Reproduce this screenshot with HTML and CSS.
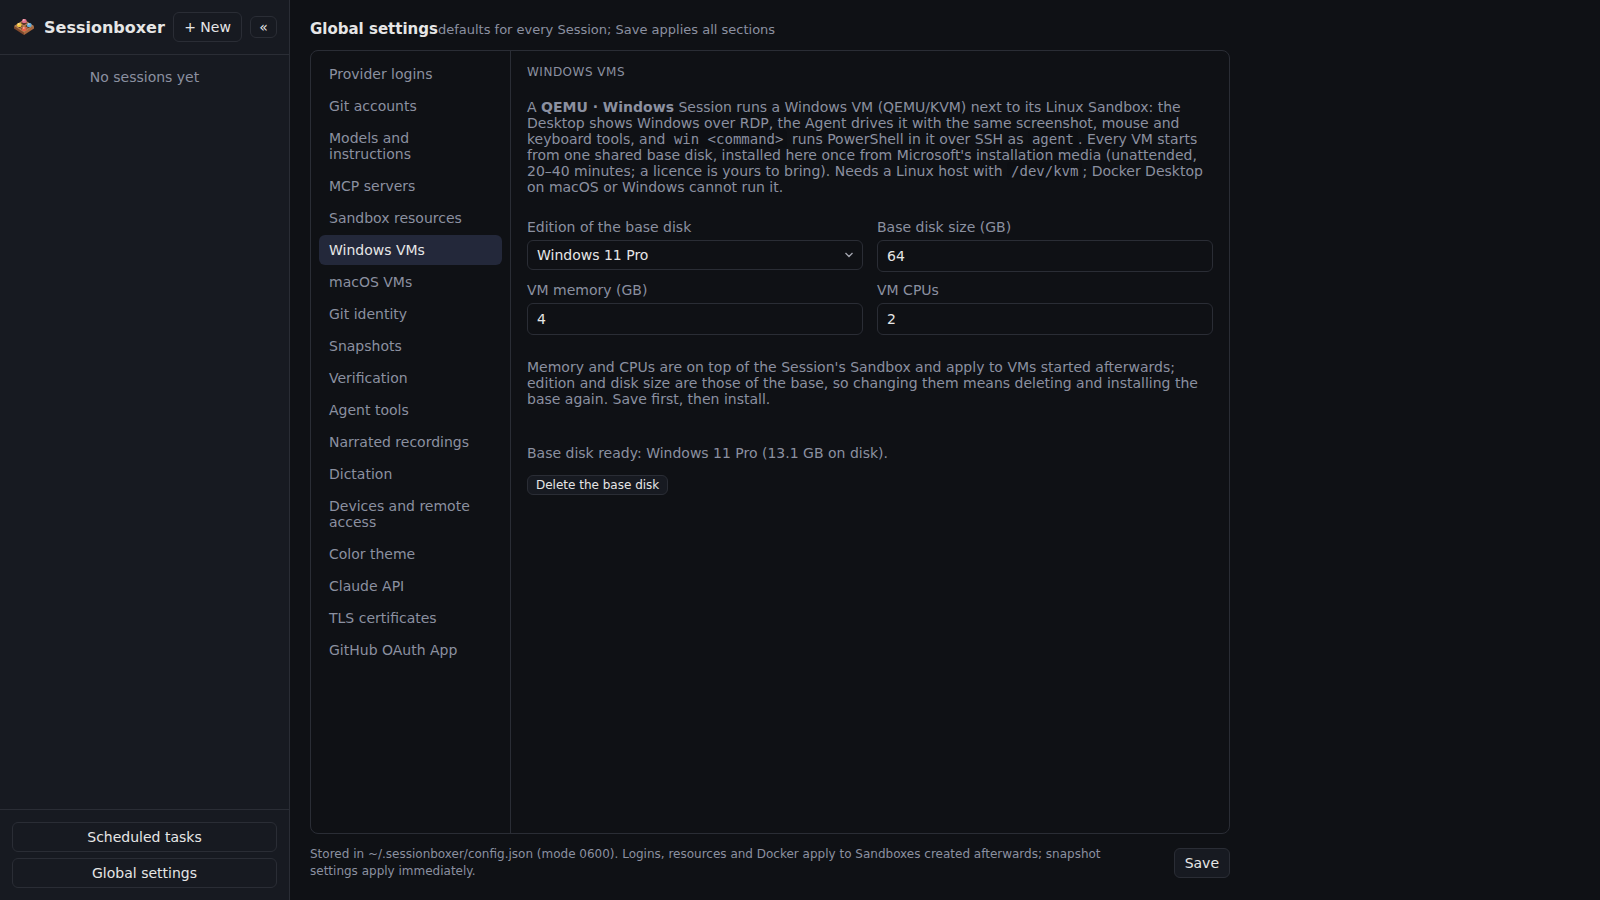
FILE: index.html
```html
<!DOCTYPE html>
<html lang="en">
<head>
<meta charset="utf-8">
<title>Sessionboxer</title>
<link rel="stylesheet" href="styles.css">
</head>
<body>
<aside class="sidebar">
  <header class="brand">
    <svg class="logo" width="24" height="22" viewBox="0 0 24 22">
      <path d="M2 10v2.500l10 6.500v-3z" fill="#80492d"/>
      <path d="M12 16v3L22 12.500v-2.500z" fill="#a8683f"/>
      <path d="M2 10 12 3.500l10 6.500-10 6.500z" fill="#b98054"/>
      <path d="M4.500 10 12 5.100l7.500 4.900L12 14.900z" fill="#573526"/>
      <path d="M8.200 7.500l7.500 5M15.800 7.500l-7.500 5" stroke="#b98054" stroke-width="1.200"/>
      <rect x="10" y="3" width="4.500" height="4" rx="1.500" fill="#e0708c"/>
      <rect x="5" y="7" width="4.500" height="4" rx="1.500" fill="#f5c842"/>
      <rect x="15" y="7" width="4.500" height="4" rx="1.500" fill="#62addd"/>
      <rect x="10" y="11" width="4.500" height="4" rx="1.500" fill="#ea6248"/>
      <path d="M11 4h1.500M6 8h1.500M16 8h1.500M11 12h1.500" stroke="#fbe3d0" stroke-width="1"/>
    </svg>
    <strong class="brand-name">Sessionboxer</strong>
    <button class="btn new">+ New</button>
    <button class="btn collapse">«</button>
  </header>
  <div class="sessions">No sessions yet</div>
  <footer class="side-foot">
    <button class="btn">Scheduled tasks</button>
    <button class="btn">Global settings</button>
  </footer>
</aside>
<main class="main">
  <div class="title"><h1>Global settings</h1><span>defaults for every Session; Save applies all sections</span></div>
  <section class="panel">
    <nav class="nav">
      <a>Provider logins</a>
      <a>Git accounts</a>
      <a>Models and instructions</a>
      <a>MCP servers</a>
      <a>Sandbox resources</a>
      <a class="active">Windows VMs</a>
      <a>macOS VMs</a>
      <a>Git identity</a>
      <a>Snapshots</a>
      <a>Verification</a>
      <a>Agent tools</a>
      <a>Narrated recordings</a>
      <a>Dictation</a>
      <a>Devices and remote access</a>
      <a>Color theme</a>
      <a>Claude API</a>
      <a>TLS certificates</a>
      <a>GitHub OAuth App</a>
    </nav>
    <div class="content">
      <h2>Windows VMs</h2>
      <p class="intro">A <b>QEMU · Windows</b> Session runs a Windows VM (QEMU/KVM) next to its Linux Sandbox: the Desktop shows Windows over RDP, the Agent drives it with the same screenshot, mouse and keyboard tools, and <code>win &lt;command&gt;</code> runs PowerShell in it over SSH as <code>agent</code>. Every VM starts from one shared base disk, installed here once from Microsoft's installation media (unattended, 20–40 minutes; a licence is yours to bring). Needs a Linux host with <code>/dev/kvm</code>; Docker Desktop on macOS or Windows cannot run it.</p>
      <div class="fields">
        <label class="field"><span>Edition of the base disk</span>
          <div class="select">Windows 11 Pro
            <svg width="10" height="6" viewBox="0 0 10 6"><path d="M1.500 1 5 4.500 8.500 1" fill="none" stroke="#a4a7b0" stroke-width="1.300"/></svg>
          </div>
        </label>
        <label class="field"><span>Base disk size (GB)</span><input value="64"></label>
        <label class="field"><span>VM memory (GB)</span><input value="4"></label>
        <label class="field"><span>VM CPUs</span><input value="2"></label>
      </div>
      <p class="note">Memory and CPUs are on top of the Session's Sandbox and apply to VMs started afterwards; edition and disk size are those of the base, so changing them means deleting and installing the base again. Save first, then install.</p>
      <p class="status">Base disk ready: Windows 11 Pro (13.1 GB on disk).</p>
      <button class="btn btn-small">Delete the base disk</button>
    </div>
  </section>
  <footer class="main-foot">
    <p>Stored in ~/.sessionboxer/config.json (mode 0600). Logins, resources and Docker apply to Sandboxes created afterwards; snapshot settings apply immediately.</p>
    <button class="btn">Save</button>
  </footer>
</main>
</body>
</html>
```
FILE: styles.css
```css
* { box-sizing: border-box; }
body {
  margin: 0;
  height: 100vh;
  display: flex;
  overflow: hidden;
  background: #0f1115;
  color: #e6e6e6;
  font: 14px/16px "DejaVu Sans", sans-serif;
}
h1, h2, p { margin: 0; }
.sidebar {
  width: 290px;
  flex: none;
  display: flex;
  flex-direction: column;
  background: #171a21;
  border-right: 1px solid #2a2d35;
}
.brand {
  height: 55px;
  padding: 0 12px;
  display: flex;
  align-items: center;
  gap: 8px;
  border-bottom: 1px solid #2a2d35;
}
.logo { flex: none; }
.brand-name { flex: 1; font-size: 16px; line-height: 19px; }
.btn {
  padding: 6px 10px;
  border: 1px solid #2a2d35;
  border-radius: 6px;
  background: #171a21;
  color: #e6e6e6;
  font: inherit;
  white-space: nowrap;
}
.btn-small {
  padding: 2px 8px;
  font-size: 12px;
  line-height: 14px;
}
.new { width: 69px; }
.collapse { width: 27px; padding: 2px 0; }
.sessions {
  flex: 1;
  padding: 14px;
  text-align: center;
  color: #8b90a0;
}
.side-foot {
  display: flex;
  flex-direction: column;
  gap: 6px;
  padding: 12px;
  border-top: 1px solid #2a2d35;
}
.main {
  width: 960px;
  padding: 20px;
  display: flex;
  flex-direction: column;
}
.title {
  display: flex;
  align-items: baseline;
  height: 18px;
  margin-bottom: 12px;
}
.title h1 { font-size: 15px; line-height: 18px; }
.title span { font-size: 13px; color: #8b90a0; }
.panel {
  flex: 1;
  display: flex;
  border: 1px solid #2a2d35;
  border-radius: 8px;
}
.nav {
  width: 200px;
  flex: none;
  display: flex;
  flex-direction: column;
  gap: 2px;
  padding: 8px;
  border-right: 1px solid #2a2d35;
  color: #8b90a0;
}
.nav a { padding: 7px 10px; border-radius: 6px; }
.nav .active { background: #23283a; color: #e6e6e6; }
.content { flex: 1; padding: 14px 16px; color: #8b90a0; }
.content h2 {
  margin-bottom: 20px;
  font-size: 12px;
  line-height: 14px;
  font-weight: 400;
  letter-spacing: 0.5px;
  text-transform: uppercase;
}
code {
  padding: 1px 4px;
  border-radius: 4px;
  background: #0d0f13;
  font: 14px/1 "DejaVu Sans Mono", monospace;
}
.fields {
  display: grid;
  grid-template-columns: 1fr 1fr;
  gap: 10px 14px;
  margin: 24px 0;
  align-items: start;
}
.field { display: flex; flex-direction: column; gap: 5px; }
.select, .field input {
  width: 100%;
  padding: 6px 9px;
  border: 1px solid #2a2d35;
  border-radius: 6px;
  background: #0f1115;
  color: #e6e6e6;
  font: inherit;
}
.select {
  height: 30px;
  padding-right: 8px;
  display: flex;
  justify-content: space-between;
  align-items: center;
}
.field input { height: 32px; }
.status { margin: 38px 0 14px; }
.main-foot {
  display: flex;
  align-items: center;
  gap: 12px;
  padding-top: 12px;
}
.main-foot p {
  flex: 1;
  padding-right: 40px;
  font-size: 12px;
  line-height: 17px;
  color: #8b90a0;
}
```
